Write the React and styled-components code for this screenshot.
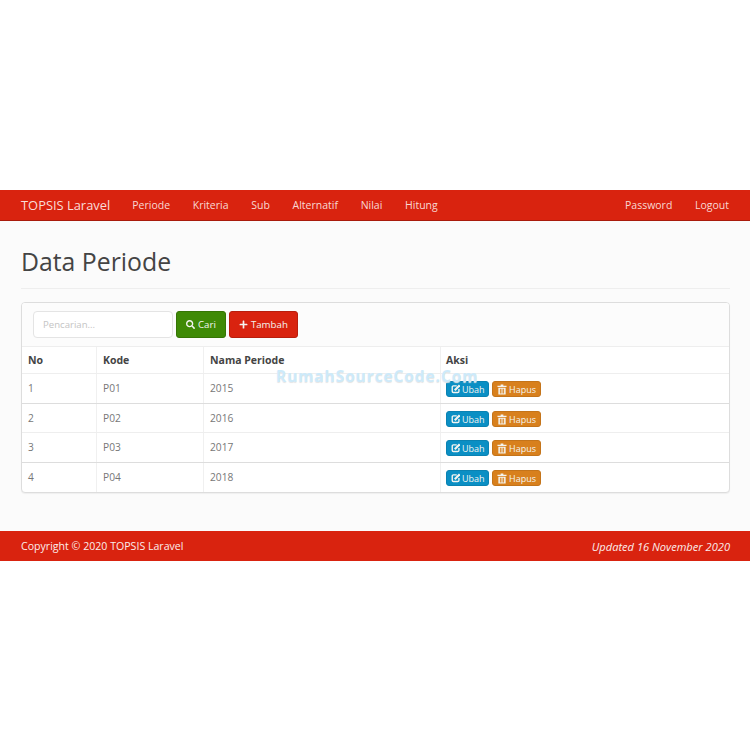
import React from 'react';
import styled, { createGlobalStyle } from 'styled-components';
import { FaSearch, FaPlus } from 'react-icons/fa';

const GlobalStyle = createGlobalStyle`
  * { box-sizing: border-box; }
  body {
    margin: 0;
    background: #ffffff;
    font-family: "Open Sans", "Liberation Sans", sans-serif;
    font-size: 11px;
    color: #777777;
  }
`;

const Page = styled.div`
  position: relative;
  padding-top: 190px;
`;

const Navbar = styled.nav`
  height: 31px;
  background: #d9230f;
  border-bottom: 1px solid #a91b0c;
  display: flex;
  align-items: center;
  padding: 0 21px 1px 21px;
  color: #f8d8d3;
`;

const Brand = styled.span`
  font-size: 12.9px;
  margin-right: 22px;
  color: #f9dcd8;
`;

const NavLink = styled.span`
  font-size: 10.5px;
  margin-right: ${(p) => (p.$last ? 0 : '22.7px')};
`;

const Spacer = styled.div`
  flex: 1;
`;

const Content = styled.main`
  background: #fbfbfb;
  height: 310px;
  padding: 0 20px 0 21px;
`;

const Title = styled.h1`
  margin: 0;
  height: 68px;
  padding-top: 24px;
  font-size: 24.8px;
  line-height: 33px;
  font-weight: 400;
  color: #444444;
  border-bottom: 1px solid #eeeeee;
`;

const Panel = styled.section`
  margin-top: 13px;
  border: 1px solid #dddddd;
  border-radius: 4px;
  background: #ffffff;
  box-shadow: 0 1px 1px rgba(0, 0, 0, 0.05);
  overflow: hidden;
`;

const Toolbar = styled.div`
  height: 43px;
  padding: 8px 11px;
  display: flex;
  gap: 3px;
  background: #fcfcfc;
`;

const SearchInput = styled.div`
  width: 140px;
  height: 27px;
  border: 1px solid #e4e4e4;
  border-radius: 4px;
  background: #ffffff;
  padding-left: 9px;
  display: flex;
  align-items: center;
  font-size: 9.6px;
  color: #c4c4c4;
`;

const Button = styled.span`
  height: 27px;
  padding: 0 9px;
  display: inline-flex;
  align-items: center;
  gap: 3px;
  border-radius: 3px;
  border: 1px solid ${(p) => p.$border};
  background: ${(p) => p.$bg};
  color: #f4f4f0;
  font-size: 9.7px;
  white-space: nowrap;
`;

const SmallButton = styled(Button)`
  height: 16px;
  padding: 0 3.5px 0 4px;
  font-size: 9px;
  gap: 2px;
`;

const Table = styled.div`
  border-top: 1px solid #eeeeee;
`;

const Row = styled.div`
  display: grid;
  grid-template-columns: 74px 107px 237px 1fr;
  height: ${(p) => p.$h}px;
  border-bottom: 1px solid ${(p) => p.$line || '#eeeeee'};
  &:last-child { border-bottom: 0; }
`;

const Cell = styled.div`
  padding: ${(p) => (p.$head ? '6px' : '6.5px')} 5px 0 ${(p) => (p.$tight ? '5px' : '6px')};
  border-left: ${(p) => (p.$first ? 0 : '1px solid #f0f0f0')};
  font-size: ${(p) => (p.$head ? '10.5px' : '10.2px')};
  line-height: 15px;
  font-weight: ${(p) => (p.$head ? 700 : 400)};
  color: ${(p) => (p.$head ? '#444444' : '#777777')};
`;

const Actions = styled(Cell)`
  display: flex;
  gap: 3px;
  padding: 7px 5px 0;
`;

const Footer = styled.footer`
  height: 30px;
  background: #d9230f;
  color: #fbeeec;
  padding: 0 20px 0 21px;
  display: flex;
  align-items: center;
  justify-content: space-between;
  font-size: 10.6px;
`;

const Updated = styled.em`
  font-style: italic;
  font-size: 11.1px;
`;

const Watermark = styled.div`
  position: absolute;
  left: 276px;
  top: 365px;
  font-size: 15.5px;
  font-weight: 700;
  letter-spacing: 0.9px;
  color: #cdeafa;
  text-shadow: 0 1px 1px #e4e4e4;
  white-space: nowrap;
`;

const EditIcon = () => (
  <svg width="9" height="10" viewBox="0 0 11 12" fill="none" stroke="currentColor">
    <path d="M7 2.2H3A1.5 1.5 0 0 0 1.5 3.7v5.1a1.5 1.5 0 0 0 1.5 1.5h5.2a1.5 1.5 0 0 0 1.5-1.5V6" strokeWidth="1.7" />
    <path d="M4.6 7.4 10.6 1.4" strokeWidth="2.6" />
  </svg>
);

const TrashIcon = () => (
  <svg width="10" height="11" viewBox="0 0 11 12" fill="currentColor">
    <path d="M4 0.5h3V1.8h3.5v1.5H.5V1.8H4z" />
    <path fillRule="evenodd" d="M1.5 4.2h8v7.3h-8zM3.2 5.2v5.3h1V5.2zM5 5.2v5.3h1V5.2zM6.8 5.2v5.3h1V5.2z" />
  </svg>
);

const rows = [
  { no: 1, kode: 'P01', nama: '2015', h: 30, line: '#dddddd' },
  { no: 2, kode: 'P02', nama: '2016', h: 29, line: '#eeeeee' },
  { no: 3, kode: 'P03', nama: '2017', h: 30, line: '#dddddd' },
  { no: 4, kode: 'P04', nama: '2018', h: 29 },
];

const navItems = ['Periode', 'Kriteria', 'Sub', 'Alternatif', 'Nilai', 'Hitung'];

export default function App() {
  return (
    <Page>
      <GlobalStyle />
      <Navbar>
        <Brand>TOPSIS Laravel</Brand>
        {navItems.map((item) => (
          <NavLink key={item}>{item}</NavLink>
        ))}
        <Spacer />
        <NavLink>Password</NavLink>
        <NavLink $last>Logout</NavLink>
      </Navbar>
      <Content>
        <Title>Data Periode</Title>
        <Panel>
          <Toolbar>
            <SearchInput>Pencarian...</SearchInput>
            <Button $bg="#3f8a06" $border="#367505">
              <FaSearch size={9} /> Cari
            </Button>
            <Button $bg="#d9230f" $border="#b81e0d">
              <FaPlus size={9} /> Tambah
            </Button>
          </Toolbar>
          <Table>
            <Row $h={27}>
              <Cell $head $first>No</Cell>
              <Cell $head>Kode</Cell>
              <Cell $head>Nama Periode</Cell>
              <Cell $head $tight>Aksi</Cell>
            </Row>
            {rows.map((row) => (
              <Row key={row.no} $h={row.h} $line={row.line}>
                <Cell $first>{row.no}</Cell>
                <Cell>{row.kode}</Cell>
                <Cell>{row.nama}</Cell>
                <Actions>
                  <SmallButton $bg="#0a8fc4" $border="#0a82b2">
                    <EditIcon /> Ubah
                  </SmallButton>
                  <SmallButton $bg="#d8801d" $border="#c4741a">
                    <TrashIcon /> Hapus
                  </SmallButton>
                </Actions>
              </Row>
            ))}
          </Table>
        </Panel>
      </Content>
      <Footer>
        <span>Copyright © 2020 TOPSIS Laravel</span>
        <Updated>Updated 16 November 2020</Updated>
      </Footer>
      <Watermark>RumahSourceCode.Com</Watermark>
    </Page>
  );
}
